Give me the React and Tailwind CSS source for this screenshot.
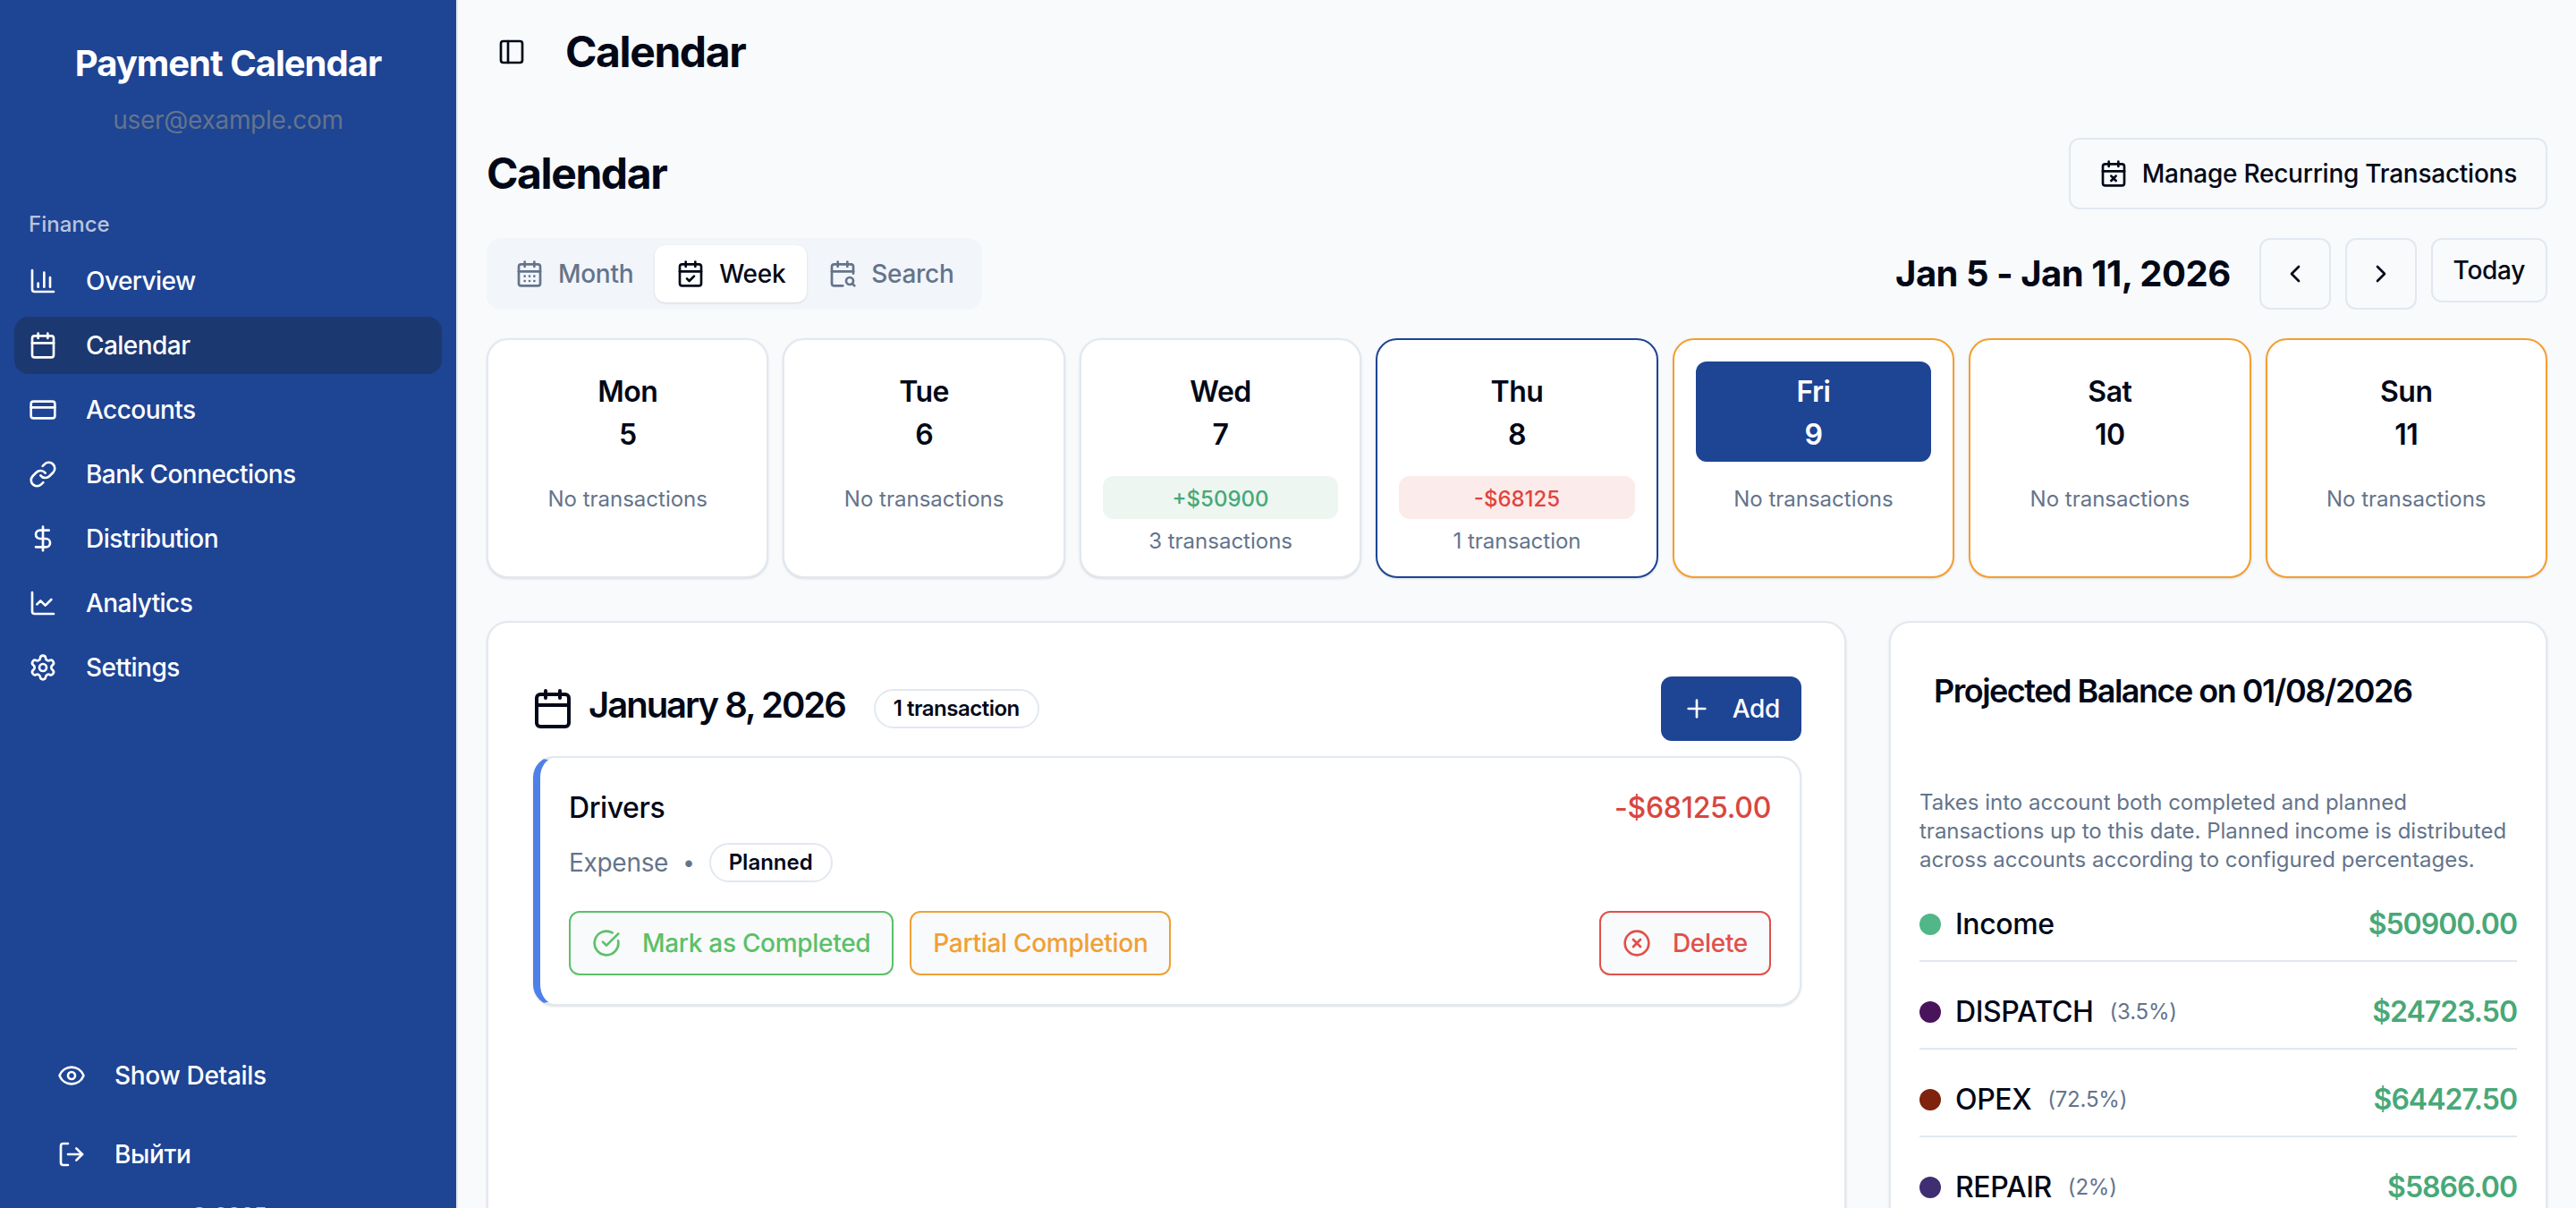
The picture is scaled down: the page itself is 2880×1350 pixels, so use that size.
import {
  CalendarCheck,
  CalendarDays,
  CalendarSearch,
  CalendarX,
  Calendar,
  ChartColumn,
  ChartLine,
  ChevronLeft,
  ChevronRight,
  CircleCheckBig,
  CircleX,
  CreditCard,
  DollarSign,
  Eye,
  Link,
  LogOut,
  PanelLeft,
  Plus,
  Settings,
} from 'lucide-react';

const navItems = [
  { label: 'Overview', icon: ChartColumn },
  { label: 'Calendar', icon: Calendar, active: true },
  { label: 'Accounts', icon: CreditCard },
  { label: 'Bank Connections', icon: Link },
  { label: 'Distribution', icon: DollarSign },
  { label: 'Analytics', icon: ChartLine },
  { label: 'Settings', icon: Settings },
];

const days = [
  { name: 'Mon', date: 5 },
  { name: 'Tue', date: 6 },
  { name: 'Wed', date: 7, amount: '+$50900', count: '3 transactions', tone: 'green' },
  { name: 'Thu', date: 8, amount: '-$68125', count: '1 transaction', tone: 'red', selected: true },
  { name: 'Fri', date: 9, today: true, weekend: true },
  { name: 'Sat', date: 10, weekend: true },
  { name: 'Sun', date: 11, weekend: true },
];

const balances = [
  { label: 'Income', amount: '$50900.00', dot: 'bg-[#52b788]' },
  { label: 'DISPATCH', pct: '(3.5%)', amount: '$24723.50', dot: 'bg-[#4a145c]' },
  { label: 'OPEX', pct: '(72.5%)', amount: '$64427.50', dot: 'bg-[#7f220e]' },
  { label: 'REPAIR', pct: '(2%)', amount: '$5866.00', dot: 'bg-[#3f2e72]' },
];

function Sidebar() {
  return (
    <aside className="flex h-screen w-[512px] shrink-0 flex-col overflow-hidden border-r-2 border-[#e2e8f0] bg-[#1e4494] text-white">
      <div className="h-[235px] shrink-0 px-4 pt-[47px] text-center">
        <h1 className="text-[40px] leading-[48px] font-bold tracking-[-1px]">Payment Calendar</h1>
        <p className="mt-[19px] text-[28px] leading-[40px] tracking-[-0.3px] text-[#64748b]">user@example.com</p>
      </div>
      <div className="h-[923px] shrink-0 px-4">
        <p className="px-4 text-[24px] leading-[32px] font-medium text-white/70">Finance</p>
        <nav className="mt-[15px] flex flex-col gap-2">
          {navItems.map(({ label, icon: Icon, active }) => (
            <a
              key={label}
              className={`flex h-[64px] items-center gap-8 rounded-2xl px-4 text-[28px] font-medium tracking-[-0.55px] ${
                active ? 'bg-[#1c3870]' : ''
              }`}
            >
              <Icon size={32} strokeWidth={2} />
              {label}
            </a>
          ))}
        </nav>
      </div>
      <div className="flex flex-col px-8 text-[28px] font-medium tracking-[-0.3px]">
        <button className="flex h-[88px] items-center gap-8 pl-8">
          <Eye size={32} />
          Show Details
        </button>
        <button className="flex h-[88px] items-center gap-8 pl-8">
          <LogOut size={32} />
          Выйти
        </button>
        <p className="mt-[9px] text-center text-[24px] leading-[32px] text-white/70">© 2025</p>
      </div>
    </aside>
  );
}

function Tabs() {
  const tabs = [
    { label: 'Month', icon: CalendarDays },
    { label: 'Week', icon: CalendarCheck, active: true },
    { label: 'Search', icon: CalendarSearch },
  ];
  return (
    <div className="flex h-[80px] items-center rounded-2xl bg-[#f2f5fa] p-2">
      {tabs.map(({ label, icon: Icon, active }) => (
        <button
          key={label}
          className={`flex h-[64px] items-center gap-4 rounded-xl px-6 text-[28px] font-medium tracking-[-0.3px] ${
            active ? 'bg-white text-[#020817] shadow-sm' : 'text-[#64748b]'
          }`}
        >
          <Icon size={32} />
          {label}
        </button>
      ))}
    </div>
  );
}

function DayCard({ day }) {
  const border = day.selected
    ? 'border-[#1e4494]'
    : day.weekend
      ? 'border-[#f59e2e]'
      : 'border-[#e2e8f0]';
  const pill = day.tone === 'green' ? 'bg-[#edf6f1] text-[#48a878]' : 'bg-[#fcebeb] text-[#e0443e]';
  return (
    <div className={`rounded-3xl border-2 bg-white p-6 text-center shadow-sm ${border}`}>
      <div
        className={`mb-4 rounded-xl pt-[10px] pb-[6px] text-[32px] leading-[48px] font-semibold tracking-[-0.5px] ${
          day.today ? 'bg-[#1e4494] text-white' : ''
        }`}
      >
        <div>{day.name}</div>
        <div>{day.date}</div>
      </div>
      {day.amount ? (
        <>
          <div className={`rounded-xl pt-[10px] pb-[6px] text-[24px] leading-[32px] font-medium ${pill}`}>{day.amount}</div>
          <div className="mt-[10px] text-[24px] leading-[30px] text-[#64748b]">{day.count}</div>
        </>
      ) : (
        <div className="pt-[10px] pb-[6px] text-[24px] leading-[32px] text-[#64748b]">No transactions</div>
      )}
    </div>
  );
}

function TransactionCard() {
  return (
    <div className="ml-[2px] rounded-3xl border-2 border-l-8 border-[#e2e8f0] border-l-[#4f7fe8] bg-white p-8 shadow-sm">
      <div className="flex items-center justify-between text-[32px] leading-[48px] font-medium">
        <span className="tracking-[-0.4px]">Drivers</span>
        <span className="tracking-[-0.3px] text-[#d9463f]">-$68125.00</span>
      </div>
      <div className="mt-[15px] flex items-center gap-4 text-[28px] text-[#64748b]">
        <span className="tracking-[-0.3px]">Expense</span>
        <span className="text-[24px]">•</span>
        <span className="rounded-full border-2 border-[#e2e8f0] px-[20px] py-[4px] text-[24px] leading-[32px] font-semibold text-[#020817]">
          Planned
        </span>
      </div>
      <div className="mt-8 flex items-center gap-[18px] text-[28px] font-medium tracking-[-0.3px]">
        <button className="flex h-[72px] items-center gap-6 rounded-xl border-2 border-[#5cc068] bg-[#f8fafc] px-6 text-[#5cc068]">
          <CircleCheckBig size={32} />
          Mark as Completed
        </button>
        <button className="flex h-[72px] items-center rounded-xl border-2 border-[#f0a035] bg-[#f8fafc] px-6 text-[#f0a035]">
          Partial Completion
        </button>
        <button className="ml-auto flex h-[72px] items-center gap-6 rounded-xl border-2 border-[#e0504a] bg-[#f8fafc] px-6 text-[#e0504a]">
          <CircleX size={32} />
          Delete
        </button>
      </div>
    </div>
  );
}

function BalanceCard() {
  return (
    <div className="rounded-3xl border-2 border-[#e2e8f0] bg-white shadow-sm">
      <h3 className="px-12 pt-12 text-[36px] leading-[56px] font-semibold tracking-[-1.5px]">
        Projected Balance on 01/08/2026
      </h3>
      <div className="px-8 pt-[81px] pb-8">
        <p className="mb-8 text-[24px] leading-[32px] text-[#64748b]">
          Takes into account both completed and planned transactions up to this date. Planned income is distributed
          across accounts according to configured percentages.
        </p>
        <div className="flex flex-col gap-8">
          {balances.map((row) => (
            <div key={row.label} className="flex items-center justify-between border-b-2 border-[#e2e8f0] pb-4">
              <div className="flex items-center">
                <span className={`mr-4 h-6 w-6 rounded-full ${row.dot}`} />
                <span className="text-[32px] leading-[48px] font-medium tracking-[-0.4px]">{row.label}</span>
                {row.pct && <span className="ml-[18px] text-[24px] tracking-[-0.2px] text-[#64748b]">{row.pct}</span>}
              </div>
              <span className="text-[32px] leading-[48px] font-semibold tracking-[-1px] text-[#48a878]">{row.amount}</span>
            </div>
          ))}
        </div>
      </div>
    </div>
  );
}

export default function App() {
  return (
    <div className="flex h-screen overflow-hidden bg-[#f8fafc] font-[Inter,sans-serif] text-[#020817]">
      <Sidebar />
      <main className="min-w-0 flex-1">
        <header className="flex h-[116px] items-center gap-8 px-8">
          <button className="flex h-14 w-14 items-center justify-center">
            <PanelLeft size={32} />
          </button>
          <h2 className="text-[48px] font-bold tracking-[-1.4px]">Calendar</h2>
        </header>
        <div className="px-8 pt-[38px]">
          <div className="flex items-center justify-between">
            <h2 className="text-[48px] font-bold tracking-[-1.4px]">Calendar</h2>
            <button className="flex h-[80px] items-center gap-4 rounded-xl border-2 border-[#e2e8f0] px-8 text-[28px] font-medium tracking-[-0.25px]">
              <CalendarX size={32} />
              Manage Recurring Transactions
            </button>
          </div>
          <div className="mt-8 flex items-start justify-between">
            <Tabs />
            <div className="flex items-start gap-4">
              <span className="mr-4 text-[40px] leading-[80px] font-bold tracking-[-0.5px]">Jan 5 - Jan 11, 2026</span>
              <button className="flex h-[80px] w-[80px] items-center justify-center rounded-xl border-2 border-[#e2e8f0]">
                <ChevronLeft size={32} />
              </button>
              <button className="flex h-[80px] w-[80px] items-center justify-center rounded-xl border-2 border-[#e2e8f0]">
                <ChevronRight size={32} />
              </button>
              <button className="h-[72px] rounded-xl border-2 border-[#e2e8f0] px-[23px] text-[28px] font-medium tracking-[-0.3px]">
                Today
              </button>
            </div>
          </div>
          <div className="mt-8 grid grid-cols-7 gap-4">
            {days.map((day) => (
              <DayCard key={day.name} day={day} />
            ))}
          </div>
          <div className="mt-12 grid grid-cols-3 gap-12">
            <div className="col-span-2 rounded-3xl border-2 border-[#e2e8f0] bg-white px-12 pt-[60px] shadow-sm">
              <div className="mb-[17px] flex items-center justify-between">
                <div className="flex items-center gap-4">
                  <Calendar size={48} />
                  <span className="pb-2 text-[40px] leading-[48px] font-semibold tracking-[-2px]">January 8, 2026</span>
                  <span className="ml-4 rounded-full border-2 border-[#e2e8f0] px-[20px] py-[4px] text-[24px] leading-[32px] font-semibold tracking-[-0.5px]">
                    1 transaction
                  </span>
                </div>
                <button className="flex h-[72px] items-center gap-6 rounded-xl bg-[#1e4494] px-6 text-[28px] font-medium tracking-[-0.3px] text-white">
                  <Plus size={32} />
                  Add
                </button>
              </div>
              <TransactionCard />
            </div>
            <BalanceCard />
          </div>
        </div>
      </main>
    </div>
  );
}
